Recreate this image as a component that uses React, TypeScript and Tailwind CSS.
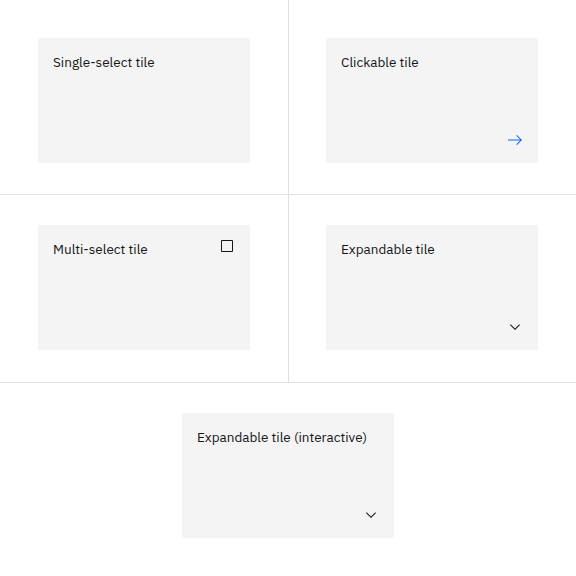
import React from "react";

const ArrowRight = () => (
  <svg width="16" height="16" viewBox="0 0 16 16" fill="#0f62fe">
    <path d="M9.3 3.7L13.1 7.5 1 7.5 1 8.5 13.1 8.5 9.3 12.3 10 13 15 8 10 3z" />
  </svg>
);

const ChevronDown = () => (
  <svg width="16" height="16" viewBox="0 0 16 16" fill="#161616">
    <path d="M8 11L3 6 3.7 5.3 8 9.6 12.3 5.3 13 6z" />
  </svg>
);

const Checkbox = () => (
  <svg width="16" height="16" viewBox="0 0 32 32" fill="#161616">
    <path d="M26,4H6A2,2,0,0,0,4,6V26a2,2,0,0,0,2,2H26a2,2,0,0,0,2-2V6A2,2,0,0,0,26,4ZM6,26V6H26V26Z" />
  </svg>
);

const Tile = ({ label, icon, iconPos }: { label: string; icon?: React.ReactNode; iconPos?: "top" | "bottom" }) => (
  <div className="relative w-[212px] h-[125px] bg-[#f4f4f4] pl-[15px] pt-[15px]">
    <p className="whitespace-nowrap text-[13.5px] leading-[18px] text-[#161616]">{label}</p>
    {icon && (
      <div className={iconPos === "top" ? "absolute top-[13px] right-[15px]" : "absolute bottom-[15px] right-[15px]"}>
        {icon}
      </div>
    )}
  </div>
);

export default function App() {
  return (
    <div
      className="w-[576px] h-[576px] bg-white"
      style={{ fontFamily: "'IBM Plex Sans', Inter, 'Noto Sans', sans-serif" }}
    >
      <div className="grid grid-cols-[289px_1fr] border-b border-[#e0e0e0]">
        <div className="h-[195px] border-r border-b border-[#e0e0e0] pl-[38px] pt-[38px]">
          <Tile label="Single-select tile" />
        </div>
        <div className="h-[195px] border-b border-[#e0e0e0] pl-[37px] pt-[38px]">
          <Tile label="Clickable tile" icon={<ArrowRight />} iconPos="bottom" />
        </div>
        <div className="h-[187px] border-r border-[#e0e0e0] pl-[38px] pt-[30px]">
          <Tile label="Multi-select tile" icon={<Checkbox />} iconPos="top" />
        </div>
        <div className="h-[187px] pl-[37px] pt-[30px]">
          <Tile label="Expandable tile" icon={<ChevronDown />} iconPos="bottom" />
        </div>
      </div>
      <div className="flex justify-center pt-[30px]">
        <Tile label="Expandable tile (interactive)" icon={<ChevronDown />} iconPos="bottom" />
      </div>
    </div>
  );
}
